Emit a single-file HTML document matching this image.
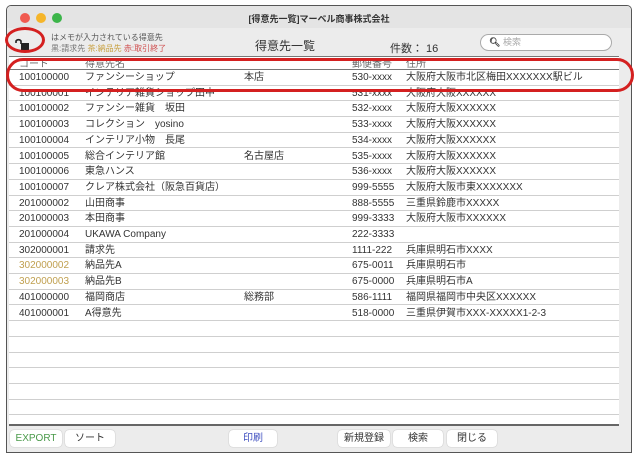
<!DOCTYPE html>
<html><head><meta charset="utf-8"><style>
*{margin:0;padding:0;box-sizing:border-box}
body{width:640px;height:460px;background:#fff;position:relative;overflow:hidden;font-family:"Liberation Sans","Noto Sans CJK JP",sans-serif;color:#333}
.win{position:absolute;left:6px;top:5px;width:626px;height:448px;border:1px solid #555;border-radius:5px 5px 0 0;background:#ececec;overflow:hidden}
.tb{position:absolute;left:0;top:0;width:100%;height:22px;background:#e4e4e4}
.dot{position:absolute;top:7px;width:10px;height:10px;border-radius:50%}
.title{position:absolute;left:0;right:0;top:6px;text-align:center;font-size:9px;font-weight:bold;color:#333}
.a{position:absolute;white-space:nowrap}
.table{position:absolute;left:2px;top:50px;width:610px;height:370px;background:#fff}
.row{position:absolute;left:0;width:610px;height:15.7px;border-bottom:1px solid #cfcfcf;font-size:10px;line-height:15px}
.row span{position:absolute;white-space:nowrap}
.c1{left:10px}.c2{left:76px}.c3{left:235px}.c4{left:343px}.c5{left:397px}
.btn{position:absolute;top:424px;height:17px;background:#fff;border-radius:4px;box-shadow:0 0 1px #999;font-size:10px;line-height:17px;text-align:center}
</style></head><body>
<div class="win">
 <div class="tb"></div>
 <div class="dot" style="left:13px;background:#f05a50"></div>
 <div class="dot" style="left:29px;background:#f5b52a"></div>
 <div class="dot" style="left:45px;background:#3cb54a"></div>
 <div class="title">[得意先一覧]マーベル商事株式会社</div>
 <div class="a" style="left:44px;top:26px;font-size:8px;color:#555">はメモが入力されている得意先</div>
 <div class="a" style="left:44px;top:37px;font-size:8px;color:#777">黒:請求先 <span style="color:#c8a040">茶:納品先</span> <span style="color:#d05050">赤:取引終了</span></div>
 <div class="a" style="left:248px;top:31px;font-size:12px;color:#333">得意先一覧</div>
 <div class="a" style="left:383px;top:34px;font-size:11px">件数： 16</div>
 <div class="a" style="left:473px;top:28px;width:132px;height:17px;border:1px solid #aaa;border-radius:9px;background:#fff;font-size:9px;color:#aaa;line-height:15px;padding-left:8px"><b style="color:#333">&#x1F50D;︎</b> 検索</div>
 <svg class="a" style="left:8px;top:30px" width="16" height="16" viewBox="0 0 16 16"><rect x="6" y="7" width="8" height="7" fill="#222"/><path d="M6 8 V5 A3 3 0 0 0 1 5 V7" fill="none" stroke="#222" stroke-width="1.6"/></svg>
 <div class="table">
  <div class="row" style="top:0;height:14px;border-top:1px solid #777;border-bottom:1px solid #777;color:#666"><span class="c1">コード</span><span class="c2">得意先名</span><span class="c4">郵便番号</span><span class="c5">住所</span></div>
  <div class="row" style="top:14px"><span class="c1">100100000</span><span class="c2">ファンシーショップ</span><span class="c3">本店</span><span class="c4">530-xxxx</span><span class="c5">大阪府大阪市北区梅田XXXXXXX駅ビル</span></div>
  <div class="row" style="top:29.7px"><span class="c1">100100001</span><span class="c2">インテリア雑貨ショップ田中</span><span class="c4">531-xxxx</span><span class="c5">大阪府大阪XXXXXX</span></div>
  <div class="row" style="top:45.4px"><span class="c1">100100002</span><span class="c2">ファンシー雑貨　坂田</span><span class="c4">532-xxxx</span><span class="c5">大阪府大阪XXXXXX</span></div>
  <div class="row" style="top:61.1px"><span class="c1">100100003</span><span class="c2">コレクション　yosino</span><span class="c4">533-xxxx</span><span class="c5">大阪府大阪XXXXXX</span></div>
  <div class="row" style="top:76.8px"><span class="c1">100100004</span><span class="c2">インテリア小物　長尾</span><span class="c4">534-xxxx</span><span class="c5">大阪府大阪XXXXXX</span></div>
  <div class="row" style="top:92.5px"><span class="c1">100100005</span><span class="c2">総合インテリア館</span><span class="c3">名古屋店</span><span class="c4">535-xxxx</span><span class="c5">大阪府大阪XXXXXX</span></div>
  <div class="row" style="top:108.2px"><span class="c1">100100006</span><span class="c2">東急ハンス</span><span class="c4">536-xxxx</span><span class="c5">大阪府大阪XXXXXX</span></div>
  <div class="row" style="top:123.9px"><span class="c1">100100007</span><span class="c2">クレア株式会社（阪急百貨店）</span><span class="c4">999-5555</span><span class="c5">大阪府大阪市東XXXXXXX</span></div>
  <div class="row" style="top:139.6px"><span class="c1">201000002</span><span class="c2">山田商事</span><span class="c4">888-5555</span><span class="c5">三重県鈴鹿市XXXXX</span></div>
  <div class="row" style="top:155.3px"><span class="c1">201000003</span><span class="c2">本田商事</span><span class="c4">999-3333</span><span class="c5">大阪府大阪市XXXXXX</span></div>
  <div class="row" style="top:171px"><span class="c1">201000004</span><span class="c2">UKAWA Company</span><span class="c4">222-3333</span></div>
  <div class="row" style="top:186.7px"><span class="c1">302000001</span><span class="c2">請求先</span><span class="c4">1111-222</span><span class="c5">兵庫県明石市XXXX</span></div>
  <div class="row" style="top:202.4px"><span class="c1" style="color:#c0a050">302000002</span><span class="c2">納品先A</span><span class="c4">675-0011</span><span class="c5">兵庫県明石市</span></div>
  <div class="row" style="top:218.1px"><span class="c1" style="color:#c0a050">302000003</span><span class="c2">納品先B</span><span class="c4">675-0000</span><span class="c5">兵庫県明石市A</span></div>
  <div class="row" style="top:233.8px"><span class="c1">401000000</span><span class="c2">福岡商店</span><span class="c3">総務部</span><span class="c4">586-1111</span><span class="c5">福岡県福岡市中央区XXXXXX</span></div>
  <div class="row" style="top:249.5px"><span class="c1">401000001</span><span class="c2">A得意先</span><span class="c4">518-0000</span><span class="c5">三重県伊賀市XXX-XXXXX1-2-3</span></div>
  <div class="row" style="top:265.2px"></div><div class="row" style="top:280.9px"></div><div class="row" style="top:296.6px"></div><div class="row" style="top:312.3px"></div><div class="row" style="top:328px"></div><div class="row" style="top:343.7px"></div>
  <div style="position:absolute;left:0;top:368px;width:610px;height:2px;background:#666"></div>
 </div>
 <div class="btn" style="left:3px;width:52px;color:#4a9a4a">EXPORT</div>
 <div class="btn" style="left:58px;width:50px">ソート</div>
 <div class="btn" style="left:222px;width:48px;color:#4050c0">印刷</div>
 <div class="btn" style="left:331px;width:52px">新規登録</div>
 <div class="btn" style="left:386px;width:50px">検索</div>
 <div class="btn" style="left:440px;width:50px">閉じる</div>
</div>
<div style="position:absolute;left:5px;top:27px;width:40px;height:26px;border:3px solid #d42020;border-radius:50%"></div>
<div style="position:absolute;left:6px;top:58px;width:628px;height:34px;border:3px solid #d42020;border-radius:17px"></div>
</body></html>
